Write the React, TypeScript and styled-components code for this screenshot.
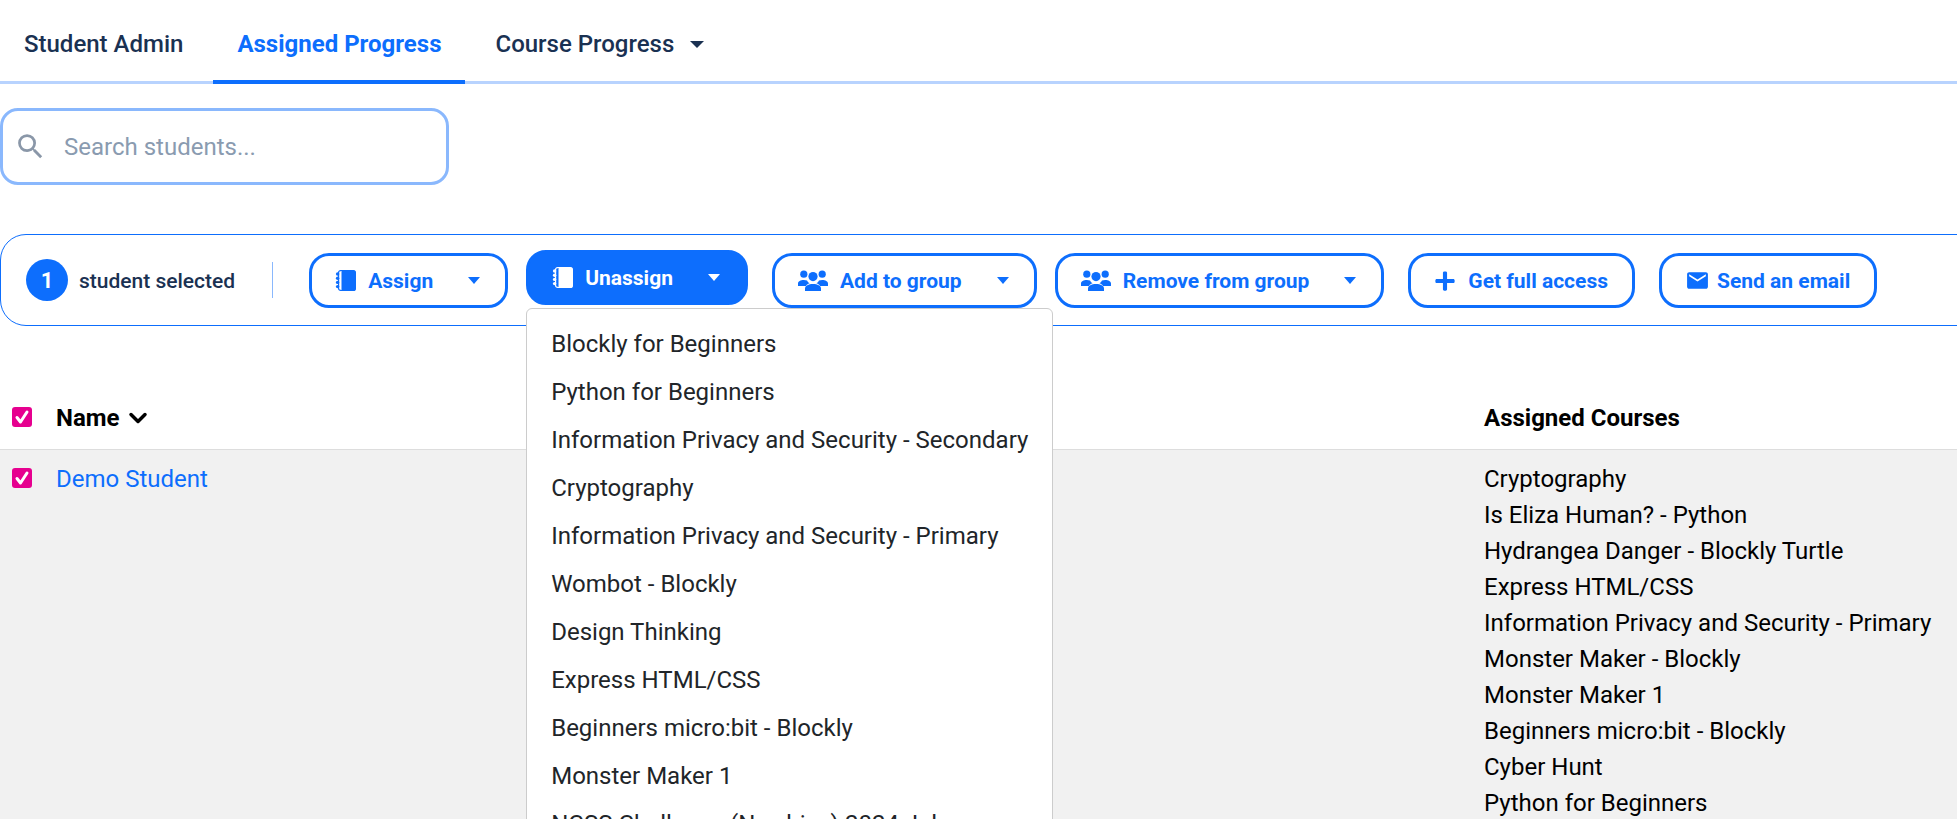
import React from 'react';
import styled, {createGlobalStyle} from "styled-components";
import {MdEmail, MdSearch} from "react-icons/md";
import {FaPlus} from "react-icons/fa";
import {ChevronDown} from "lucide-react";

const blue = "#0d6efd";
const navy = "#1a3152";

const GlobalStyle = createGlobalStyle`
    * {
        box-sizing: border-box;
    }
    html, body {
        margin: 0;
        height: 100%;
        overflow: hidden;
        background: #fff;
    }
    body {
        font-family: Roboto, "Liberation Sans", sans-serif;
        font-size: 24px;
        color: #000;
    }
`

const menuCourses = [
    "Blockly for Beginners",
    "Python for Beginners",
    "Information Privacy and Security - Secondary",
    "Cryptography",
    "Information Privacy and Security - Primary",
    "Wombot - Blockly",
    "Design Thinking",
    "Express HTML/CSS",
    "Beginners micro:bit - Blockly",
    "Monster Maker 1",
    "NCSS Challenge (Newbies) 2024 July",
];

const assignedCourses = [
    "Cryptography",
    "Is Eliza Human? - Python",
    "Hydrangea Danger - Blockly Turtle",
    "Express HTML/CSS",
    "Information Privacy and Security - Primary",
    "Monster Maker - Blockly",
    "Monster Maker 1",
    "Beginners micro:bit - Blockly",
    "Cyber Hunt",
    "Python for Beginners",
];

const NotebookIcon = () => (
    <svg width="21" height="21" viewBox="0 0 21 21" fill="currentColor">
        <rect x="3.6" y="0.6" width="16.8" height="19.8" rx="2" fill="none" stroke="currentColor" strokeWidth="1.2"/>
        <rect x="6.5" y="0.6" width="13.9" height="19.8" rx="1.5"/>
        <circle cx="2.6" cy="4" r="1.7"/>
        <circle cx="2.6" cy="8.2" r="1.7"/>
        <circle cx="2.6" cy="12.4" r="1.7"/>
        <circle cx="2.6" cy="16.6" r="1.7"/>
    </svg>
);

const GroupIcon = () => (
    <svg width="30" height="21" viewBox="0 0 30 21" fill="currentColor">
        <circle cx="5.8" cy="4.2" r="3.6"/>
        <circle cx="24.2" cy="4.2" r="3.6"/>
        <circle cx="15" cy="6.6" r="4.6"/>
        <path d="M0 13.5c0-2.4 2.6-3.6 5.8-3.6 1.2 0 2.3.2 3.2.5.6 1.3 1.5 2.3 2.6 2.9-1.8.6-3.2 1.5-3.6 2.7H0z"/>
        <path d="M30 13.5c0-2.4-2.6-3.6-5.8-3.6-1.2 0-2.3.2-3.2.5-.6 1.3-1.5 2.3-2.6 2.9 1.8.6 3.2 1.5 3.6 2.7H30z"/>
        <path d="M7 21v-2.6c0-2.6 3.6-4.4 8-4.4s8 1.8 8 4.4V21z"/>
    </svg>
);

const CheckMark = () => (
    <svg width="16" height="16" viewBox="0 0 16 16" fill="none" stroke="#fff" strokeWidth="3" strokeLinecap="round" strokeLinejoin="round">
        <path d="M3 8.5 6.5 13 13 3"/>
    </svg>
);

type ActionProps = {
    icon: React.ReactNode;
    label: string;
    caret?: boolean;
    active?: boolean;
    tight?: boolean;
    iconGap?: number;
};

const ActionButton = ({icon, label, caret, active, tight, iconGap}: ActionProps) => (
    <Action $active={active} $caret={caret} $tight={tight}>
        <ActionIcon $gap={iconGap ?? 12}>{icon}</ActionIcon>
        {label}
        {caret && <Caret/>}
    </Action>
);

const Checkbox = () => (
    <Tick><CheckMark/></Tick>
);

export default function App() {
    return (
        <Page>
            <GlobalStyle/>
            <Tabs>
                <Tab>Student Admin</Tab>
                <Tab $active>Assigned Progress</Tab>
                <Tab>Course Progress<TabCaret/></Tab>
            </Tabs>
            <Search>
                <MdSearch size={33} color="#8a97a8"/>
                <SearchInput placeholder="Search students..."/>
            </Search>
            <Toolbar>
                <Count>1</Count>
                <CountLabel>student selected</CountLabel>
                <Divider/>
                <ActionButton icon={<NotebookIcon/>} label="Assign" caret/>
                <UnassignWrap>
                    <ActionButton icon={<NotebookIcon/>} label="Unassign" caret active/>
                    <Menu>
                        {menuCourses.map(course => <MenuItem key={course}>{course}</MenuItem>)}
                    </Menu>
                </UnassignWrap>
                <ActionButton icon={<GroupIcon/>} label="Add to group" caret/>
                <ActionButton icon={<GroupIcon/>} label="Remove from group" caret tight/>
                <ActionButton icon={<FaPlus size={22}/>} label="Get full access"/>
                <ActionButton icon={<MdEmail size={25}/>} label="Send an email" iconGap={7}/>
            </Toolbar>
            <HeaderRow>
                <Checkbox/>
                <NameHead>Name <ChevronDown size={28} strokeWidth={3}/></NameHead>
                <CourseHead>Assigned Courses</CourseHead>
            </HeaderRow>
            <StudentRow>
                <Checkbox/>
                <StudentName href="#">Demo Student</StudentName>
                <CourseList>
                    {assignedCourses.map(course => <li key={course}>{course}</li>)}
                </CourseList>
            </StudentRow>
        </Page>
    );
}

const Page = styled.div`
    height: 819px;
    overflow: hidden;
`
const Tabs = styled.nav`
    display: flex;
    gap: 6px;
    height: 84px;
    border-bottom: 3px solid #b8d3fe;
`
const Tab = styled.a<{$active?: boolean}>`
    display: flex;
    align-items: center;
    height: 84px;
    padding: 8px 24px 0;
    font-size: 24px;
    font-weight: ${props => props.$active ? 700 : 500};
    color: ${props => props.$active ? blue : navy};
    border-bottom: 4px solid ${props => props.$active ? blue : "transparent"};
`
const TabCaret = styled.span`
    margin-left: 16px;
    border-left: 7px solid transparent;
    border-right: 7px solid transparent;
    border-top: 7px solid ${navy};
`
const Search = styled.label`
    display: flex;
    align-items: center;
    gap: 15px;
    width: 449px;
    height: 77px;
    margin-top: 24px;
    padding-left: 11px;
    border: 3px solid #8ab8fd;
    border-radius: 18px;
`
const SearchInput = styled.input`
    flex: 1;
    min-width: 0;
    border: none;
    outline: none;
    background: none;
    font-family: inherit;
    font-size: 24px;
    &::placeholder {
        color: #8a9bb0;
    }
`
const Toolbar = styled.section`
    display: flex;
    align-items: center;
    gap: 24px;
    width: 2100px;
    height: 92px;
    margin-top: 49px;
    padding-left: 25px;
    border: 1px solid ${blue};
    border-radius: 26px;
`
const Count = styled.span`
    display: flex;
    align-items: center;
    justify-content: center;
    width: 42px;
    height: 42px;
    margin-right: -13px;
    border-radius: 50%;
    background: ${blue};
    color: #fff;
    font-size: 22px;
    font-weight: 700;
`
const CountLabel = styled.span`
    padding-top: 1px;
    font-size: 21px;
    font-weight: 500;
    color: ${navy};
`
const Divider = styled.span`
    width: 1px;
    height: 36px;
    margin: 0 12px 0 13px;
    background: #8ab8fd;
`
const Action = styled.button<{$active?: boolean; $caret?: boolean; $tight?: boolean}>`
    display: flex;
    align-items: center;
    height: 55px;
    margin-left: ${props => props.$tight ? "-6px" : "0"};
    padding: 1px ${props => props.$caret ? "25px" : "24px"} 0 23px;
    border: 3px solid ${blue};
    border-radius: 20px;
    background: ${props => props.$active ? blue : "#fff"};
    color: ${props => props.$active ? "#fff" : blue};
    font-family: inherit;
    font-size: 21px;
    font-weight: 700;
    white-space: nowrap;
`
const ActionIcon = styled.span<{$gap: number}>`
    display: flex;
    margin-right: ${props => props.$gap}px;
`
const Caret = styled.span`
    margin-left: 35px;
    border-left: 6px solid transparent;
    border-right: 6px solid transparent;
    border-top: 7px solid currentColor;
`
const UnassignWrap = styled.div`
    position: relative;
    top: -3px;
    margin-left: -6px;
`
const Menu = styled.ul`
    position: absolute;
    top: 58px;
    left: 0;
    width: 527px;
    margin: 0;
    padding: 11px 0;
    list-style: none;
    background: #fff;
    border: 1px solid #ccc;
    border-radius: 6px;
    z-index: 2;
`
const MenuItem = styled.li`
    height: 48px;
    padding: 0 24px;
    line-height: 48px;
    color: #212529;
    white-space: nowrap;
`
const HeaderRow = styled.div`
    display: grid;
    grid-template-columns: 56px 1428px 1fr;
    align-items: center;
    height: 124px;
    padding-top: 61px;
    border-bottom: 1px solid #ddd;
`
const Tick = styled.span`
    display: flex;
    align-items: center;
    justify-content: center;
    width: 20px;
    height: 20px;
    margin: 0 0 3px 12px;
    border-radius: 3px;
    background: #e6008f;
`
const NameHead = styled.div`
    display: flex;
    align-items: center;
    gap: 4px;
    font-weight: 700;
`
const CourseHead = styled.div`
    font-weight: 700;
`
const StudentRow = styled.div`
    display: grid;
    grid-template-columns: 56px 1428px 1fr;
    align-items: start;
    padding-top: 11px;
    height: 400px;
    background: #f1f1f1;
    line-height: 36px;
    ${Tick} {
        margin-top: 7px;
    }
`
const StudentName = styled.a`
    color: ${blue};
    text-decoration: none;
`
const CourseList = styled.ul`
    margin: 0;
    padding: 0;
    list-style: none;
    white-space: nowrap;
`
